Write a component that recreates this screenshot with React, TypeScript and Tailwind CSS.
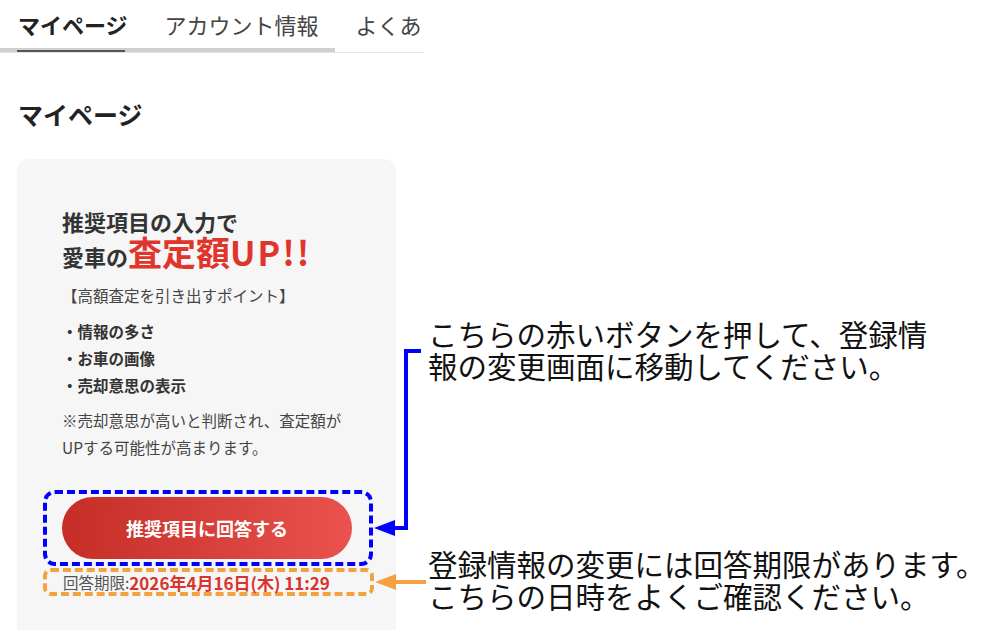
const App = () => {
  return (
    <div className="relative flex h-[630px] w-[985px] overflow-hidden bg-white font-['Noto_Sans_CJK_JP',sans-serif] text-[#333]">
      {/* left: page */}
      <div className="flex w-[425px] shrink-0 flex-col">
        {/* tabs */}
        <div className="relative h-[53px] w-[424px] shrink-0 overflow-hidden border-b border-[#e5e5e5]">
          <div className="flex gap-[37px] whitespace-nowrap pl-[18px] pt-[9px] text-[22px] leading-[30px]">
            <span className="font-bold text-[#222]">マイページ</span>
            <span className="text-[#444]">アカウント情報</span>
            <span className="text-[#444]">よくある質問</span>
          </div>
          <div className="absolute bottom-0 left-0 h-[4px] w-[335px] bg-[#cfcfcf]" />
          <div className="absolute bottom-0 left-[17px] h-[2px] w-[108px] bg-[#555]" />
        </div>

        <h1 className="mt-[45px] shrink-0 pl-[18px] text-[25px] font-bold leading-[32px] text-[#222]">マイページ</h1>

        {/* card */}
        <div className="ml-[17px] mt-[29px] h-[560px] w-[379px] shrink-0 rounded-[12px] bg-[#f6f6f6] pl-[26px]">
          <div className="pl-[19px]">
            <p className="pt-[47px] text-[22px] font-bold leading-[30px]">推奨項目の入力で</p>
            <p className="text-[22px] font-bold leading-[32px]">
              愛車の
              <span className="text-[34px] text-[#e0352b]">
                査定額<span className="tracking-[2px]">UP!!</span>
              </span>
            </p>
            <p className="mt-[10px] text-[15.5px] leading-[27px] text-[#444]">【高額査定を引き出すポイント】</p>
            <ul className="mt-[9px] text-[15.5px] font-bold leading-[27px]">
              <li>・情報の多さ</li>
              <li>・お車の画像</li>
              <li>・売却意思の表示</li>
            </ul>
            <p className="mt-[8px] text-[15.5px] leading-[27px] text-[#444]">
              ※売却意思が高いと判断され、査定額が
              <br />
              UPする可能性が高まります。
            </p>
          </div>

          <div className="mt-[29px] w-[330px] rounded-[12px] border-4 border-dashed border-[#0000ff] pb-[3px] pl-[15px] pt-[3px]">
            <button className="flex h-[62px] w-[290px] items-center justify-center rounded-full bg-linear-to-r from-[#c52d26] to-[#e9524d] text-[18px] font-bold text-white">
              推奨項目に回答する
            </button>
          </div>
          <div className="mt-[2px] flex h-[28px] w-[331px] items-center rounded-[8px] border-4 border-dashed border-[#f4a23f] pl-[16px] text-[15.5px] leading-[19px]">
            <span className="text-[#555]">回答期限:</span>
            <span className="text-[17px] font-bold text-[#d9342b]">2026年4月16日(木) 11:29</span>
          </div>
        </div>
      </div>

      {/* right: notes */}
      <div className="flex flex-col whitespace-nowrap pl-[3px] text-[29.5px] leading-[32px] text-[#111]">
        <p className="mt-[317px]">
          こちらの赤いボタンを押して、登録情
          <br />
          報の変更画面に移動してください。
        </p>
        <p className="mt-[166px]">
          登録情報の変更には回答期限があります。
          <br />
          こちらの日時をよくご確認ください。
        </p>
      </div>

      {/* arrows */}
      <svg className="pointer-events-none absolute inset-0" width="985" height="630" viewBox="0 0 985 630">
        <polyline points="421,351 406,351 406,528 392,528" fill="none" stroke="#0000ff" strokeWidth="4" />
        <polygon points="374,528 395,520 395,536" fill="#0000ff" />
        <line x1="426" y1="582" x2="392" y2="582" stroke="#f4a23f" strokeWidth="4" />
        <polygon points="375,582 396,574 396,590" fill="#f4a23f" />
      </svg>
    </div>
  )
}

export default App
